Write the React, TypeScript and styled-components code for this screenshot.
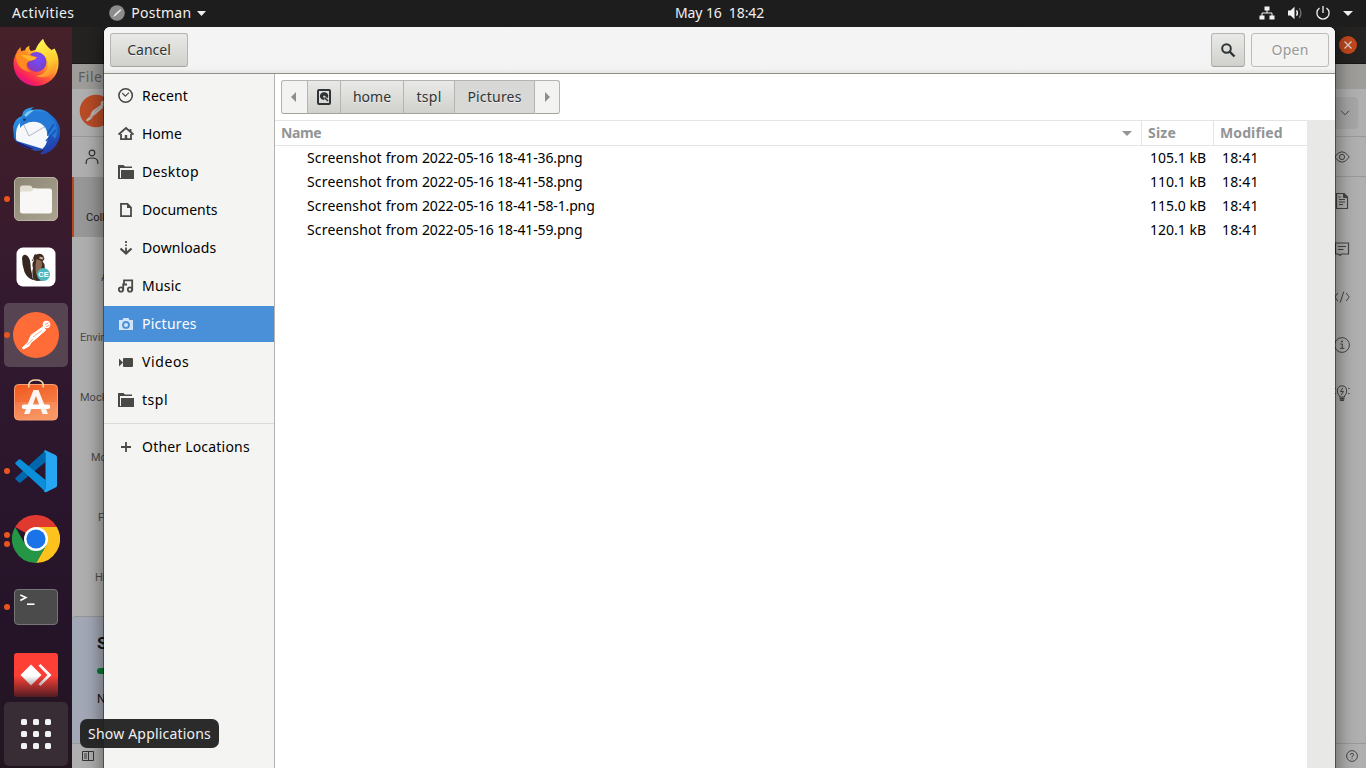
import React from "react";
import styled, { createGlobalStyle, css } from "styled-components";

const GlobalStyle = createGlobalStyle`
  * { box-sizing: border-box; }
  html, body, #root { margin: 0; height: 100%; overflow: hidden; }
  body { font-family: "Noto Sans", "Open Sans", sans-serif; font-size: 14px; color: #000; }
  svg { display: block; flex: none; }
`;

/* ---------- shell ---------- */

const Desktop = styled.div`
  width: 1366px;
  height: 768px;
  display: flex;
  flex-direction: column;
  overflow: hidden;
  background: #1d1d1d;
`;

const TopBar = styled.header`
  height: 27px;
  flex: none;
  display: grid;
  grid-template-columns: 663px auto 1fr;
  align-items: center;
  padding: 0 13px 1px 12px;
  background: #1d1d1d;
  color: #f0f0f0;
  line-height: 24px;
`;

const TopGroup = styled.div`
  display: flex;
  align-items: center;
`;

const Tray = styled.div`
  display: flex;
  align-items: center;
  justify-content: flex-end;
  gap: 12px;
`;

const TopLabel = styled.span<{ $track?: number }>`
  letter-spacing: ${(p) => p.$track ?? 0}px;
  white-space: pre;
`;

const AppMenu = styled.div`
  display: flex;
  align-items: center;
  margin-left: 35px;
  gap: 6px;
`;

const Body = styled.div`
  flex: 1;
  min-height: 0;
  display: flex;
`;

/* ---------- dock ---------- */

const Dock = styled.nav`
  width: 72px;
  flex: none;
  display: flex;
  flex-direction: column;
  background: linear-gradient(#46212a 0, #3c1c2b 20%, #321930 40%, #2a162c 62%, #251429 80%, #231520 100%);
`;

const DockList = styled.div`
  height: 675px;
  flex: none;
  overflow: hidden;
  display: flex;
  flex-direction: column;
  gap: 4px;
  padding: 4px 4px 0;
`;

const DockTile = styled.div<{ $active?: boolean }>`
  position: relative;
  width: 64px;
  height: 64px;
  flex: none;
  display: flex;
  align-items: center;
  justify-content: center;
  border-radius: 5px;
  background: ${(p) => (p.$active ? "#574453" : "transparent")};
`;

const Dots = styled.div`
  position: absolute;
  left: 0;
  top: 0;
  height: 64px;
  display: flex;
  flex-direction: column;
  justify-content: center;
  gap: 3px;
`;

const Dot = styled.i`
  width: 6px;
  height: 6px;
  border-radius: 3px;
  background: #e95420;
`;

const ShowApps = styled.div`
  width: 64px;
  height: 64px;
  margin: 0 4px;
  border-radius: 5px;
  background: #382c35;
  display: grid;
  grid-template-columns: repeat(3, 6px);
  grid-auto-rows: 6px;
  gap: 6px;
  place-content: center;
`;

const AppDot = styled.i`
  border-radius: 1.5px;
  background: #f2f2f2;
`;

const Tooltip = styled.div`
  position: absolute;
  z-index: 5;
  left: 80px;
  top: 719px;
  width: 139px;
  height: 29px;
  padding-left: 8px;
  border-radius: 7px;
  background: rgba(32, 32, 32, 0.95);
  color: #f0f0f0;
  line-height: 29px;
  letter-spacing: 0.2px;
  white-space: nowrap;
`;

/* ---------- dimmed window behind the dialog ---------- */

const Workspace = styled.main`
  position: relative;
  flex: 1;
  min-width: 0;
  overflow: hidden;
`;

const BackWindow = styled.div`
  height: 100%;
  display: flex;
  flex-direction: column;
  background: #afafaf;
  font-family: Roboto, "Liberation Sans", sans-serif;
`;

const BackTitle = styled.div`
  height: 37px;
  flex: none;
  display: flex;
  justify-content: flex-end;
  align-items: center;
  padding-right: 9px;
  background: #252322;
  border-bottom: 1px solid #171716;
`;

const CloseButton = styled.div`
  width: 18px;
  height: 18px;
  border-radius: 50%;
  background: #c0471c;
  display: grid;
  place-items: center;
`;

const BackMenu = styled.div`
  height: 25px;
  flex: none;
  padding-left: 6px;
  background: #9e9d9a;
  color: #5e5e5b;
  font: 14px/25px "Noto Sans", sans-serif;
  letter-spacing: 0.5px;
`;

const BackHeader = styled.div`
  height: 48px;
  flex: none;
  display: flex;
  justify-content: space-between;
  align-items: center;
  padding: 0 8px 0 7px;
  border-bottom: 1px solid #999;
`;

const LogoSlot = styled.div`
  padding-bottom: 4px;
`;

const Chip = styled.div`
  width: 60px;
  height: 32px;
  border-radius: 4px;
  background: #a5a5a5;
  display: flex;
  align-items: center;
  justify-content: flex-end;
  padding-right: 8px;
`;

const BackTabs = styled.div`
  height: 40px;
  flex: none;
  display: flex;
  justify-content: space-between;
  align-items: center;
  padding: 0 16px 0 13px;
`;

const BackColumns = styled.div`
  flex: 1;
  min-height: 0;
  display: flex;
  justify-content: space-between;
`;

const Rail = styled.div`
  width: 82px;
  display: flex;
  flex-direction: column;
`;

const RailItem = styled.div<{ $indent: number; $active?: boolean }>`
  height: 60px;
  flex: none;
  padding: 34px 0 0 ${(p) => p.$indent}px;
  font-size: 11px;
  line-height: 13px;
  color: #4b4b4b;
  ${(p) =>
    p.$active &&
    css`
      background: #989898;
      color: #1e1e1e;
      box-shadow: inset 2px 0 #b9491f;
    `}
`;

const StartCard = styled.div`
  flex: 1;
  margin-top: 19px;
  padding: 16px 0 0 25px;
  border-radius: 4px 0 0 0;
  border-top: 1px solid #959595;
  background: #a2a8b5;
  color: #151515;
`;

const CardTitle = styled.div`
  font-size: 17px;
  font-weight: bold;
  line-height: 20px;
`;

const Progress = styled.div`
  width: 50px;
  height: 6px;
  margin: 15px 0 18px;
  border-radius: 3px;
  background: #087b39;
`;

const CardText = styled.div`
  font-size: 12px;
  line-height: 15px;
`;

const RightRail = styled.div`
  width: 56px;
  border-top: 1px solid #999;
  display: flex;
  flex-direction: column;
  align-items: center;
  gap: 32px;
  padding: 16px 0 0 8px;
  margin-top: -1px;
`;

const BackStatus = styled.div`
  height: 25px;
  flex: none;
  display: flex;
  justify-content: space-between;
  align-items: center;
  padding: 0 8px 0 9px;
  border-top: 1px solid #999;
`;

/* ---------- dialog ---------- */

const Dialog = styled.section`
  position: absolute;
  left: 32px;
  top: 0;
  width: 1231px;
  height: 760px;
  display: flex;
  flex-direction: column;
  border-radius: 6px 6px 0 0;
  overflow: hidden;
  background: #fff;
`;

const DialogShadow = styled.div`
  position: absolute;
  left: 32px;
  top: 0;
  width: 1231px;
  height: 780px;
  border-radius: 6px 6px 0 0;
  box-shadow: 0 0 0 1px rgba(0, 0, 0, 0.4), 0 3px 18px 3px rgba(0, 0, 0, 0.42);
`;

const DialogHeader = styled.div`
  height: 47px;
  flex: none;
  display: flex;
  align-items: center;
  padding: 0 6px;
  gap: 6px;
  background: linear-gradient(#f5f5f5, #f3f3f3 90%, #e7e7e5 98%);
  border-bottom: 1px solid #8f8e88;
`;

const Button = styled.button<{ $w: number; $off?: boolean; $push?: boolean }>`
  width: ${(p) => p.$w}px;
  height: 34px;
  padding: 0;
  margin-left: ${(p) => (p.$push ? "auto" : "0")};
  display: grid;
  place-items: center;
  border: 1px solid #b5b4b0;
  border-bottom-color: #a3a29d;
  border-radius: 3px;
  background: linear-gradient(#e9e9e7, #d0d0cc);
  color: #2e3436;
  font: 14px/30px "Noto Sans", sans-serif;
  text-shadow: 0 1px rgba(255, 255, 255, 0.7);
  ${(p) =>
    p.$off &&
    css`
      background: #f3f3f2;
      border-color: #bdbcb9;
      color: #959998;
      letter-spacing: 0.25px;
    `}
`;

const DialogBody = styled.div`
  flex: 1;
  min-height: 0;
  display: flex;
`;

const Sidebar = styled.aside`
  width: 171px;
  flex: none;
  display: flex;
  flex-direction: column;
  gap: 2px;
  padding-top: 4px;
  background: #f4f4f2;
  border-right: 1px solid #b3b2af;
`;

const Place = styled.div<{ $selected?: boolean; $track?: number }>`
  height: 36px;
  flex: none;
  display: flex;
  align-items: center;
  gap: 8px;
  padding: 0 0 2px 14px;
  background: ${(p) => (p.$selected ? "#4a90d9" : "transparent")};
  color: ${(p) => (p.$selected ? "#fff" : "#000")};
  letter-spacing: ${(p) => p.$track ?? 0}px;
  svg {
    margin-top: 2px;
    color: ${(p) => (p.$selected ? "#d3e4f6" : "#494946")};
  }
`;

const Divider = styled.hr`
  width: 100%;
  height: 1px;
  flex: none;
  margin: 3px 0;
  border: 0;
  background: #dadad7;
`;

const Content = styled.div`
  flex: 1;
  min-width: 0;
  display: flex;
  flex-direction: column;
`;

const PathBar = styled.div`
  display: flex;
  height: 34px;
  flex: none;
  margin: 6px 0 6px 6px;
`;

const Crumb = styled.div<{ $w: number; $kind?: "arrow" | "current"; $track?: number }>`
  width: ${(p) => p.$w}px;
  display: grid;
  place-items: center;
  border: 1px solid #b5b4b0;
  border-bottom-color: #a3a29d;
  border-right-width: 0;
  background: ${(p) =>
    p.$kind === "arrow" ? "#f3f3f2" : p.$kind === "current" ? "#d8d8d6" : "linear-gradient(#e9e9e7, #d0d0cc)"};
  color: ${(p) => (p.$kind === "arrow" ? "#8b8e8f" : "#2e3436")};
  letter-spacing: ${(p) => p.$track ?? 0}px;
  line-height: 32px;
  text-shadow: 0 1px rgba(255, 255, 255, 0.6);
  &:first-child { border-radius: 3px 0 0 3px; padding-right: 2px; }
  &:last-child { border-radius: 0 3px 3px 0; border-right-width: 1px; }
`;

const FileArea = styled.div`
  flex: 1;
  min-height: 0;
  display: flex;
`;

const FileTable = styled.div`
  width: 1032px;
  flex: none;
`;

const Gutter = styled.div`
  flex: 1;
  background: #e8e8e6;
`;

const rowGrid = css`
  display: grid;
  grid-template-columns: 867px 72px 93px;
`;

const HeadRow = styled.div`
  ${rowGrid}
  height: 26px;
  border-top: 1px solid #e4e4e2;
  border-bottom: 1px solid #e4e4e2;
  color: #929595;
  font-weight: bold;
  line-height: 24px;
`;

const HeadCell = styled.div<{ $last?: boolean; $track?: number }>`
  display: flex;
  align-items: center;
  justify-content: space-between;
  padding: 0 9px 0 6px;
  border-right: ${(p) => (p.$last ? "0" : "1px solid #e4e4e2")};
  letter-spacing: ${(p) => p.$track ?? 0}px;
`;

const FileRow = styled.div`
  ${rowGrid}
  height: 24px;
  line-height: 24px;
  white-space: nowrap;
`;

const NameCell = styled.div`
  padding-left: 32px;
  white-space: pre;
  letter-spacing: 0.16px;
`;

const Stamp = styled.span`
  letter-spacing: -0.13px;
`;

const SizeCell = styled.div`
  padding-right: 8px;
  text-align: right;
`;

const TimeCell = styled.div`
  padding-left: 8px;
  letter-spacing: 0.15px;
`;

/* ---------- drawings ---------- */

const Astronaut = ({ size = 48, disc = "#ff6c37", ink = "#fff" }) => (
  <svg width={size} height={size} viewBox="0 0 48 48">
    <circle cx="24" cy="24" r="23" fill={disc} />
    <circle cx="34.500" cy="13.500" r="3.800" fill={ink} />
    <path d="M31 15.800 L33.800 19 L23.500 28 L19 31.500 L17 35 L11.500 38 L10.200 36.900 L16 31.500 L19 24.200 Z" fill={ink} stroke={ink} strokeLinejoin="round" />
    <path d="M29.800 19.500 L21 26 M20.800 28 L15 34" stroke={disc} strokeWidth="0.600" />
    <path d="M33 13.500 L36.500 11.800 M34 15.800 L37.400 14" stroke={disc} strokeWidth="0.700" />
  </svg>
);

const Pen = () => (
  <svg width="16" height="16" viewBox="0 0 16 16">
    <circle cx="8" cy="8" r="7.800" fill="#8c8c8c" />
    <path d="M11.300 4.200 L12.400 5.300 L7 10.300 L3.800 12.200 L6 9 Z" fill="#f2f2f2" />
  </svg>
);

const Firefox = () => (
  <svg width="48" height="48" viewBox="0 1 48 48">
    <defs>
      <linearGradient id="ffBody" x1="0.85" y1="0.1" x2="0.25" y2="1">
        <stop offset="0" stopColor="#fff14f" />
        <stop offset="0.35" stopColor="#ffb52a" />
        <stop offset="0.62" stopColor="#ff5a36" />
        <stop offset="0.85" stopColor="#f71d60" />
        <stop offset="1" stopColor="#d6119c" />
      </linearGradient>
      <radialGradient id="ffGlobe" cx="0.6" cy="0.35" r="0.8">
        <stop offset="0" stopColor="#7d49ff" />
        <stop offset="0.5" stopColor="#7545d8" />
        <stop offset="1" stopColor="#a42fa8" />
      </radialGradient>
      <linearGradient id="ffTail" x1="0.5" y1="0" x2="0.8" y2="1">
        <stop offset="0" stopColor="#fff44f" />
        <stop offset="0.6" stopColor="#ffc92e" />
        <stop offset="1" stopColor="#ff7d2e" />
      </linearGradient>
    </defs>
    <path d="M3.500 17 Q4.500 13 8.500 9 L9 13.500 Q11 12 13 12.500 Q14 9 17.500 7.500 Q16.500 11 19 13 L27 11 Q27 5.500 31 1 Q33 8 39.500 12 L42.500 10.500 Q47 18 46.500 26 A22.500 22 0 0 1 1.500 26 Q1 21 3.500 17 Z" fill="url(#ffBody)" />
    <path d="M23 13 Q26 5 31 1 Q33 7 39 12 Q42 14.500 42.300 18 L43.500 14 Q48 25 43 33 Q36 42 24 38 Q36 36 36 26 Q36 19 31 17 Q27 14 23 13 Z" fill="url(#ffTail)" />
    <circle cx="24.500" cy="24" r="10" fill="url(#ffGlobe)" />
    <path d="M3.500 17 Q7 13 13 13.500 Q18 18 25 19 Q24 22 20 22.500 Q15 23 14.500 27 Q14 31 19 34 Q8 33 5 24 Z" fill="#ff8a1f" />
    <path d="M8 16.500 Q16 17 24.500 19.500 Q22 22.500 17 22.500 Z" fill="#ffb82e" />
  </svg>
);

const Thunderbird = () => (
  <svg width="48" height="48" viewBox="0 0 48 48">
    <defs>
      <linearGradient id="tb" x1="0.2" y1="0" x2="0.8" y2="1">
        <stop offset="0" stopColor="#2fa3ea" />
        <stop offset="0.45" stopColor="#1f6fd0" />
        <stop offset="1" stopColor="#2538a8" />
      </linearGradient>
    </defs>
    <path d="M1 20 Q3 11 10 9 Q10 1 22 0 Q19 2 19 3 Q32 0 39 8 Q46 13 48 22 Q49 33 42 41 Q35 48 28 47 L33 42 Q26 46 18 42 Q6 40 2 31 Z" fill="url(#tb)" />
    <path d="M4 32 Q3 20 9 15 L28 11 L38 21 Q37 34 31 42 L5 34 Z" fill="#f7f8fb" />
    <path d="M10 14 L17 29 L34 19" fill="none" stroke="#a9adb8" strokeWidth="0.9" />
    <path d="M8 17 Q10 5 23 4 Q35 4 43 15 Q47 24 43 34 Q42 27 35 29 Q36 20 28 16 Q20 13 13 17 Q10 18 8 21 Z" fill="#247ad6" />
    <path d="M12 8 Q16 3 22 3 L14 10 Z" fill="#7cc8f2" />
    <path d="M4 34 L22 42 Q15 43 6 37 Z" fill="#2a1a68" />
    <path d="M36 26 L42 17 M34 34 L44 23 M31 42 L44 31" stroke="#1b51b4" strokeWidth="1.500" />
    <ellipse cx="12.500" cy="12.800" rx="1.500" ry="1" fill="#16336b" />
  </svg>
);

const Files = () => (
  <svg width="48" height="48" viewBox="0 0 48 48">
    <defs>
      <linearGradient id="fl" x1="0" y1="0" x2="1" y2="1">
        <stop offset="0" stopColor="#8c8573" />
        <stop offset="1" stopColor="#aaa491" />
      </linearGradient>
    </defs>
    <rect x="2.500" y="2.500" width="43" height="43" rx="4.500" fill="url(#fl)" stroke="#b8b3a4" />
    <path d="M8 24 V13 Q8 10.500 10.500 10.500 H18 Q20 10.500 20.500 13 H24 V24 Z" fill="#e2ded3" />
    <path d="M8 18 Q8 16.500 10 16.500 H19 L23 13.500 H37.500 Q40 13.500 40 16 V36 Q40 38.500 37.500 38.500 H10.500 Q8 38.500 8 36 Z" fill="#f8f7f5" />
  </svg>
);

const DBeaver = () => (
  <svg width="40" height="40" viewBox="0 0 40 40">
    <rect x="0.500" y="0.500" width="39" height="39" rx="6.500" fill="#fff" />
    <path d="M6 11 Q7 7 10 8 Q14 10 14.500 17 Q14.500 22 16 27 L17 33 Q11 31 8.500 25 Q6 18 6 11 Z" fill="#35271f" />
    <path d="M18 8.500 Q19 6.500 20.500 7.500 Q25 5.500 27.500 9 L28.500 12 L26.500 14.500 Q29.500 17 28.500 22 L28 32 Q23 34 17.500 32.500 Q15.500 27 17 21 Q15.500 17 18 13 Z" fill="#3e2b22" />
    <path d="M20.500 12 L25.500 14 Q27 18 25 22 Q24 26 20.500 28 Q18.500 22 20.500 12 Z" fill="#8b6851" />
    <path d="M23.500 9.500 L27.500 10.500 L27 12.500 L23.500 12 Z" fill="#c5a58f" />
    <path d="M16 14 Q18 12 18 9.500 M14.500 31 Q20 35 27 33" stroke="#35271f" fill="none" />
    <circle cx="27.500" cy="27.500" r="6.500" fill="#4db8bd" />
    <text x="27.500" y="30.300" textAnchor="middle" fontFamily="Liberation Sans, sans-serif" fontWeight="bold" fontSize="7.500" fill="#fff">CE</text>
  </svg>
);

const Software = () => (
  <svg width="48" height="48" viewBox="0 3 48 48">
    <defs>
      <linearGradient id="sw" x1="0" y1="0" x2="0.4" y2="1">
        <stop offset="0" stopColor="#f1571d" />
        <stop offset="1" stopColor="#f68a52" />
      </linearGradient>
    </defs>
    <rect x="2.500" y="8.500" width="43" height="35.500" rx="4" fill="url(#sw)" stroke="#f8a074" />
    <rect x="3" y="26" width="42" height="17.500" rx="3" fill="#fff" opacity="0.1" />
    <path d="M16.800 11.500 V9 Q17 4 24 4 Q31 4 31.200 9 V11.500" fill="none" stroke="#f4d5a5" strokeWidth="1.700" />
    <path d="M21.500 14 H26.500 L36 38 H30.500 L24 20 L17.500 38 H12 Z" fill="#fbf6f2" />
    <rect x="9.800" y="28.500" width="28.400" height="4.500" rx="2.200" fill="#fff" />
  </svg>
);

const VSCode = () => (
  <svg width="48" height="48" viewBox="0 0 48 48">
    <path d="M4.500 30 L33.500 3.200 V15 L8.500 35.600 Q7.500 36 6.800 35.400 L3.500 32.300 Q2.500 31 4.500 30 Z" fill="#0067ad" />
    <path d="M4.500 18 Q2.500 16.700 3.500 15.500 L6.800 12.500 Q7.500 12 8.500 12.500 L33.500 33 V44.800 Z" fill="#0b8fdb" />
    <path d="M33.500 3.200 L43.500 8 Q45 8.800 45 10.200 V38.500 Q45 40 43.500 40.600 L34.500 45 Q33 45.500 32 44.500 L33.500 42 V6 L32 4 Q32.700 3 33.500 3.200 Z" fill="#27a7f2" />
  </svg>
);

const Chrome = () => (
  <svg width="48" height="48" viewBox="0 0 48 48">
    <path d="M24 24 L3.200 12 A24 24 0 0 1 44.800 12 Z" fill="#e03a30" />
    <path d="M24 12 H44.800 A24 24 0 0 1 24 48 L34.400 30 Z" fill="#fcc31e" />
    <path d="M3.200 12 L13.600 30 L34.400 30 L24 48 A24 24 0 0 1 3.200 12 Z" fill="#249646" />
    <circle cx="24" cy="24" r="12" fill="#fff" />
    <circle cx="24" cy="24" r="9.600" fill="#1a73e8" />
  </svg>
);

const Terminal = () => (
  <svg width="48" height="48" viewBox="0 0 48 48">
    <rect x="2.500" y="6.500" width="43" height="35" rx="3.500" fill="#4b4b4b" stroke="#757575" />
    <path d="M8.300 12 L14 14.500 L8.300 17.500" fill="none" stroke="#fff" strokeWidth="1.500" />
    <path d="M15 21.200 H22.500" stroke="#fff" strokeWidth="1.600" />
  </svg>
);

const AnyDesk = () => (
  <svg width="48" height="48" viewBox="0 0 48 48">
    <defs>
      <linearGradient id="adFade" x1="0" y1="0" x2="0" y2="1">
        <stop offset="0.520" stopColor="#27141f" stopOpacity="0" />
        <stop offset="1" stopColor="#27141f" stopOpacity="0.800" />
      </linearGradient>
    </defs>
    <rect x="2" y="2" width="44" height="44" rx="3" fill="#fd3f36" />
    <path d="M8.500 24 L19 13.500 L29.500 24 L19 34.500 Z" fill="#fff" />
    <path d="M26.500 14.800 L28.500 13 L39.500 24 L28.500 35 L26.500 33.200 L35.500 24 Z" fill="#fff" />
    <rect x="2" y="2" width="44" height="44" fill="url(#adFade)" />
  </svg>
);

const Triangle = ({ w, h, dir }: { w: number; h: number; dir: "down" | "left" | "right" }) => (
  <svg width={w} height={h} viewBox="0 0 10 10" preserveAspectRatio="none">
    <path d={dir === "down" ? "M0 0 H10 L5 10 Z" : dir === "left" ? "M10 0 V10 L0 5 Z" : "M0 0 V10 L10 5 Z"} fill="currentColor" />
  </svg>
);

const NetworkIcon = () => (
  <svg width="16" height="16" viewBox="0 0 16 16">
    <path d="M5.500 1.500 h5 v4 h-5 Z M0.500 10.500 h5 v4 h-5 Z M10.500 10.500 h5 v4 h-5 Z" fill="#f2f2f2" />
    <path d="M8 5 V8 M3 11 V8 H13 V11" stroke="#f2f2f2" fill="none" />
  </svg>
);

const VolumeIcon = () => (
  <svg width="16" height="16" viewBox="0 0 16 16">
    <path d="M1 5.500 H3.500 L7.500 1.800 V14.200 L3.500 10.500 H1 Z" fill="#f2f2f2" />
    <path d="M9.500 5.300 Q11.300 8 9.500 10.700" stroke="#f2f2f2" strokeWidth="1.400" fill="none" />
    <path d="M12.200 3 Q15.600 8 12.200 13" stroke="#777" strokeWidth="1.300" fill="none" />
  </svg>
);

const PowerIcon = () => (
  <svg width="16" height="16" viewBox="0 0 16 16">
    <path d="M4.500 3 A6.100 6.100 0 1 0 11.500 3" stroke="#f2f2f2" strokeWidth="1.300" fill="none" />
    <path d="M8 1 V8" stroke="#f2f2f2" strokeWidth="1.300" />
  </svg>
);

const Glyph = ({ children }: { children: React.ReactNode }) => (
  <svg width="16" height="16" viewBox="0 0 16 16" fill="none" stroke="currentColor" strokeWidth="1.800">
    {children}
  </svg>
);

const RecentGlyph = () => (
  <Glyph>
    <circle cx="7.600" cy="7.500" r="6.700" strokeWidth="1.600" />
    <path d="M4.300 5 L7.300 8.100 L11 4.600" strokeWidth="1.200" />
  </Glyph>
);
const HomeGlyph = () => (
  <Glyph>
    <path d="M0.500 8.600 L8 2 L15.500 8.600" />
    <path d="M3 8 V13.100 H13 V8" />
    <path d="M8 13 V9" strokeWidth="2.400" />
    <path d="M12.500 3 V6" />
  </Glyph>
);
const FolderGlyph = () => (
  <Glyph>
    <path d="M0 1 H5.500 L7 2.500 H14 V4 H2 V15 H0 Z" fill="currentColor" stroke="none" />
    <path d="M3 6 H16 V15 H3 Z" fill="currentColor" stroke="none" />
    <path d="M1.500 14.500 H15" strokeWidth="1" />
  </Glyph>
);
const DocumentGlyph = () => (
  <Glyph>
    <path d="M3 1.900 H9.500 L13 5.500 V14.100 H3 Z" />
    <path d="M9 1.500 V6 H13.500 Z" fill="currentColor" stroke="none" />
  </Glyph>
);
const DownloadGlyph = () => (
  <Glyph>
    <path d="M8 1 V3 M8 4.500 V6 M8 7.500 V13" />
    <path d="M2.500 8.500 L8 13.500 L13.500 8.500" strokeWidth="2.200" />
  </Glyph>
);
const MusicGlyph = () => (
  <Glyph>
    <circle cx="3" cy="11.500" r="2.200" />
    <circle cx="12" cy="11.500" r="2.200" />
    <path d="M5.200 12 V6.500 H9 M6 6.500 V2.300 H14.200 V12" />
  </Glyph>
);
const CameraGlyph = () => (
  <Glyph>
    <path fillRule="evenodd" d="M1 4 H4.500 L5.500 2 H10.500 L11.500 4 H15 V14 H1 Z M8 5 A3.900 3.900 0 1 0 8 12.800 A3.900 3.900 0 1 0 8 5 Z" fill="currentColor" stroke="none" />
    <circle cx="8" cy="8.900" r="2" fill="currentColor" stroke="none" />
  </Glyph>
);
const VideoGlyph = () => (
  <Glyph>
    <rect x="5" y="4" width="10" height="9" rx="1" fill="currentColor" stroke="none" />
    <path d="M1 4.500 L5 8.500 L1 12.500 Z" fill="currentColor" stroke="none" />
  </Glyph>
);
const PlusGlyph = () => (
  <Glyph>
    <path d="M8 3 V13 M3 8 H13" />
  </Glyph>
);

const SearchGlyph = () => (
  <svg width="16" height="16" viewBox="0 0 16 16" fill="none" stroke="#2e3436" strokeWidth="2">
    <circle cx="6.500" cy="6.500" r="4.300" />
    <path d="M9.500 9.500 L14.500 14.500" strokeWidth="2.400" />
  </svg>
);

const DiskGlyph = () => (
  <svg width="16" height="16" viewBox="0 0 16 16">
    <rect x="2" y="1" width="12" height="14" rx="1" fill="none" stroke="#2e3436" strokeWidth="2" />
    <path d="M8 3.300 A3.800 3.800 0 1 0 8.500 10.800 L7.500 8.300 A1 1 0 1 1 9 7 L11.500 9.500 A3.800 3.800 0 0 0 8 3.300 Z" fill="#2e3436" />
    <path d="M8.500 8.500 L12 12" stroke="#2e3436" strokeWidth="1.600" />
  </svg>
);

const LineIcon = ({ size = 16, children }: { size?: number; children: React.ReactNode }) => (
  <svg width={size} height={size} viewBox="0 0 16 16" fill="none" stroke="#444" strokeWidth="1">
    {children}
  </svg>
);

/* ---------- data ---------- */

const dockApps = [
  { id: "firefox", icon: <Firefox />, windows: 0 },
  { id: "thunderbird", icon: <Thunderbird />, windows: 0 },
  { id: "files", icon: <Files />, windows: 1 },
  { id: "dbeaver", icon: <DBeaver />, windows: 0 },
  { id: "postman", icon: <Astronaut />, windows: 1, active: true },
  { id: "software", icon: <Software />, windows: 0 },
  { id: "vscode", icon: <VSCode />, windows: 1 },
  { id: "chrome", icon: <Chrome />, windows: 2 },
  { id: "terminal", icon: <Terminal />, windows: 1 },
  { id: "anydesk", icon: <AnyDesk />, windows: 0 },
];

const places = [
  { label: "Recent", icon: <RecentGlyph />, track: 0.2 },
  { label: "Home", icon: <HomeGlyph /> },
  { label: "Desktop", icon: <FolderGlyph />, track: 0.35 },
  { label: "Documents", icon: <DocumentGlyph /> },
  { label: "Downloads", icon: <DownloadGlyph />, track: 0.12 },
  { label: "Music", icon: <MusicGlyph />, track: 0.2 },
  { label: "Pictures", icon: <CameraGlyph />, selected: true, track: 0.27 },
  { label: "Videos", icon: <VideoGlyph />, track: 0.6 },
  { label: "tspl", icon: <FolderGlyph />, track: 0.55 },
];

const railItems = [
  { label: "Coll", indent: 14, active: true },
  { label: "A", indent: 29 },
  { label: "Envir", indent: 8 },
  { label: "Mock", indent: 8 },
  { label: "Mo", indent: 19 },
  { label: "F", indent: 26 },
  { label: "Hi", indent: 23 },
];

const files = [
  { stamp: "2022-05-16 18-41-36.png", size: "105.1 kB", time: "18:41" },
  { stamp: "2022-05-16 18-41-58.png", size: "110.1 kB", time: "18:41" },
  { stamp: "2022-05-16 18-41-58-1.png", size: "115.0 kB", time: "18:41" },
  { stamp: "2022-05-16 18-41-59.png", size: "120.1 kB", time: "18:41" },
];

/* ---------- page ---------- */

const BackgroundApp = () => (
  <BackWindow>
    <BackTitle>
      <CloseButton>
        <svg width="8" height="8" viewBox="0 0 8 8" stroke="#d8d2cf" strokeWidth="1.300">
          <path d="M0.500 0.500 L7.500 7.500 M7.500 0.500 L0.500 7.500" />
        </svg>
      </CloseButton>
    </BackTitle>
    <BackMenu>File</BackMenu>
    <BackHeader>
      <LogoSlot>
        <Astronaut size={34} disc="#b94c26" ink="#bbb" />
      </LogoSlot>
      <Chip>
        <svg width="10" height="6" viewBox="0 0 10 6" fill="none" stroke="#444">
          <path d="M1 0.800 L5 4.800 L9 0.800" />
        </svg>
      </Chip>
    </BackHeader>
    <BackTabs>
      <svg width="14" height="16" viewBox="0 0 14 16" fill="none" stroke="#333" strokeWidth="1.200">
        <circle cx="7" cy="4" r="2.800" />
        <path d="M1.200 15 V13 Q1.500 9 7 9 Q12.500 9 12.800 13 V15" />
      </svg>
      <LineIcon>
        <path d="M0.700 8 Q8 -2.500 15.300 8 Q8 18.500 0.700 8 Z" />
        <circle cx="8" cy="8" r="2.600" />
      </LineIcon>
    </BackTabs>
    <BackColumns>
      <Rail>
        {railItems.map((item) => (
          <RailItem key={item.label} $indent={item.indent} $active={item.active}>
            {item.label}
          </RailItem>
        ))}
        <StartCard>
          <CardTitle>S</CardTitle>
          <Progress />
          <CardText>N</CardText>
        </StartCard>
      </Rail>
      <RightRail>
        <LineIcon>
          <path d="M2.500 0.500 H10 L13.500 4 V15.500 H2.500 Z M5 6.500 h6 M5 9 h6 M5 11.500 h4 M4.500 4 h2" strokeWidth="1.200" />
          <path d="M9.500 0.500 V4.500 H13.500 Z" fill="#444" />
        </LineIcon>
        <LineIcon>
          <path d="M1.500 2 H14.500 V13 H7.500 L6 14.500 L4.500 13 H1.500 Z M4 5.500 h8 M4 8.500 h5.500" strokeWidth="1.200" />
        </LineIcon>
        <LineIcon>
          <path d="M3.800 4 L0.800 8 L3.800 12 M12.200 4 L15.200 8 L12.200 12 M9.800 2.500 L6.200 13.500" />
        </LineIcon>
        <LineIcon>
          <circle cx="8" cy="8" r="7.400" />
          <path d="M6.300 7 H8.300 V11.200 M6 11.300 H10.400" />
          <circle cx="8" cy="4.500" r="0.900" fill="#444" stroke="none" />
        </LineIcon>
        <LineIcon>
          <path d="M5.500 11 Q3.300 9 3.300 6 Q3.500 1 8 0.800 Q12.500 1 12.700 6 Q12.700 9 10.500 11 V12 H5.500 Z" />
          <path d="M5.500 13.500 H10.500 M6 15.300 H10" strokeWidth="1.400" />
          <path d="M8.800 3 L6.500 6.500 H9.500 L7.300 10 M0.300 3.500 h1.500 M0.300 8.500 h1.500 M14.200 3.500 h1.500 M14.200 8.500 h1.500" />
        </LineIcon>
      </RightRail>
    </BackColumns>
    <BackStatus>
      <svg width="14" height="12" viewBox="0 0 14 12" fill="none" stroke="#333">
        <path d="M1.500 1.500 H12.500 V10.500 H1.500 Z M7.500 1.500 V10.500 M3 4 h3 M3 6 h3 M3 8 h3" />
      </svg>
      <LineIcon size={12}>
        <circle cx="8" cy="8" r="7.200" strokeWidth="1.300" />
        <path d="M5.800 6.500 Q6 4.500 8 4.500 Q10.200 4.500 10.200 6.400 Q10 7.500 8 8.500 V9.700 M8 11 V12.300" strokeWidth="1.300" />
      </LineIcon>
    </BackStatus>
  </BackWindow>
);

const FileDialog = () => (
  <Dialog>
    <DialogHeader>
      <Button $w={78}>Cancel</Button>
      <Button $w={34} $push>
        <SearchGlyph />
      </Button>
      <Button $w={78} $off>
        Open
      </Button>
    </DialogHeader>
    <DialogBody>
      <Sidebar>
        {places.map((place) => (
          <Place key={place.label} $selected={place.selected} $track={place.track}>
            {place.icon}
            {place.label}
          </Place>
        ))}
        <Divider />
        <Place $track={0.2}>
          <PlusGlyph />
          Other Locations
        </Place>
      </Sidebar>
      <Content>
        <PathBar>
          <Crumb $w={26} $kind="arrow">
            <Triangle w={5} h={10} dir="left" />
          </Crumb>
          <Crumb $w={33}>
            <DiskGlyph />
          </Crumb>
          <Crumb $w={63}>home</Crumb>
          <Crumb $w={51} $track={0.3}>tspl</Crumb>
          <Crumb $w={80} $kind="current" $track={0.2}>
            Pictures
          </Crumb>
          <Crumb $w={26} $kind="arrow">
            <Triangle w={5} h={10} dir="right" />
          </Crumb>
        </PathBar>
        <FileArea>
          <FileTable>
            <HeadRow>
              <HeadCell $track={-0.4}>
                Name
                <Triangle w={10} h={5} dir="down" />
              </HeadCell>
              <HeadCell $track={0.2}>Size</HeadCell>
              <HeadCell $last $track={0.1}>Modified</HeadCell>
            </HeadRow>
            {files.map((file) => (
              <FileRow key={file.stamp}>
                <NameCell>
                  {"Screenshot from "}
                  <Stamp>{file.stamp}</Stamp>
                </NameCell>
                <SizeCell>{file.size}</SizeCell>
                <TimeCell>{file.time}</TimeCell>
              </FileRow>
            ))}
          </FileTable>
          <Gutter />
        </FileArea>
      </Content>
    </DialogBody>
  </Dialog>
);

export default function App() {
  return (
    <Desktop>
      <GlobalStyle />
      <TopBar>
        <TopGroup>
          <TopLabel $track={0.4}>Activities</TopLabel>
          <AppMenu>
            <Pen />
            <TopLabel $track={0.25}>Postman</TopLabel>
            <Triangle w={9} h={5} dir="down" />
          </AppMenu>
        </TopGroup>
        <TopLabel $track={-0.1}>{"May 16  18:42"}</TopLabel>
        <Tray>
          <NetworkIcon />
          <VolumeIcon />
          <PowerIcon />
          <Triangle w={10} h={5} dir="down" />
        </Tray>
      </TopBar>
      <Body>
        <Dock>
          <DockList>
            {dockApps.map((app) => (
              <DockTile key={app.id} $active={app.active}>
                {app.windows > 0 && (
                  <Dots>
                    {Array.from({ length: app.windows }, (_, i) => (
                      <Dot key={i} />
                    ))}
                  </Dots>
                )}
                {app.icon}
              </DockTile>
            ))}
          </DockList>
          <ShowApps>
            {Array.from({ length: 9 }, (_, i) => (
              <AppDot key={i} />
            ))}
          </ShowApps>
        </Dock>
        <Workspace>
          <BackgroundApp />
          <DialogShadow />
          <FileDialog />
        </Workspace>
      </Body>
      <Tooltip>Show Applications</Tooltip>
    </Desktop>
  );
}
